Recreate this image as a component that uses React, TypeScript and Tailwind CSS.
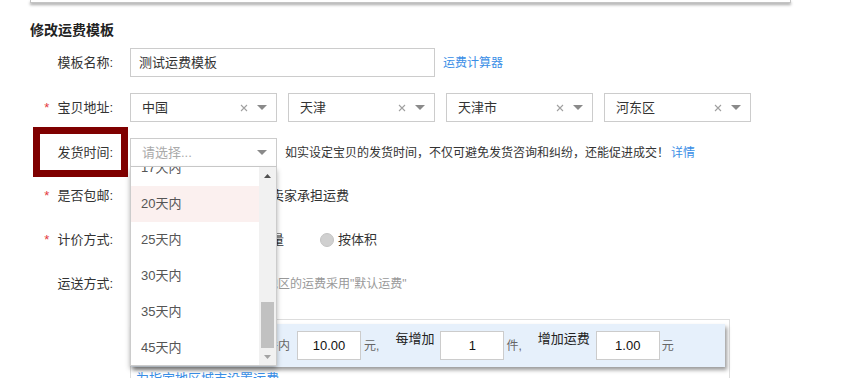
import React from "react";

function Caret({ className = "" }: { className?: string }) {
  return (
    <svg width="10" height="5" viewBox="0 0 10 5" className={className}>
      <path d="M0 0H10L5 5Z" fill="#8a8a8a" />
    </svg>
  );
}

function Cross() {
  return (
    <svg width="8" height="8" viewBox="0 0 8 8">
      <path d="M1 1L7 7M7 1L1 7" stroke="#a0a0a0" strokeWidth="1.1" />
    </svg>
  );
}

function Label({ req, children }: { req?: boolean; children: React.ReactNode }) {
  return (
    <div className="w-[85px] shrink-0 pr-[2px] text-right text-[13px] leading-[16px] text-[#333]">
      {req && <span className="mr-[8px] text-[#e4393c]">*</span>}
      {children}
    </div>
  );
}

function Select({ value }: { value: string }) {
  return (
    <div className="flex h-[29px] w-[147px] shrink-0 items-center border border-[#ccc] bg-white pl-[11px] pr-[9px]">
      <span className="flex-1 text-[13px] text-[#333]">{value}</span>
      <Cross />
      <Caret className="ml-[9px]" />
    </div>
  );
}

function Radio({ text, mr = "" }: { text: string; mr?: string }) {
  return (
    <div className={`flex items-center ${mr}`}>
      <span className="h-[14px] w-[14px] rounded-full border border-[#c4c4c4] bg-[#d0d0d0]" />
      <span className="ml-[4px] text-[13px] text-[#333]">{text}</span>
    </div>
  );
}

function NumInput({ value }: { value: string }) {
  return (
    <div className="flex h-[29px] w-[64px] shrink-0 items-center justify-center border border-[#ccc] bg-white text-[13px] text-[#111]">
      {value}
    </div>
  );
}

export default function App() {
  const items = ["17天内", "20天内", "25天内", "30天内", "35天内", "45天内"];
  return (
    <div className="relative h-[378px] w-[841px] overflow-hidden bg-white font-['Liberation_Sans','Noto_Sans_CJK_SC',sans-serif]">
      {/* bottom of previous panel */}
      <div className="ml-[30px] h-[3px] w-[761px] border-x border-b border-[#c4c4c4] shadow-[0_2px_3px_rgba(0,0,0,0.35)]" />

      <div className="pl-[30px]">
        <div className="mt-[19px] text-[14px] font-bold leading-[16px] text-[#222]">修改运费模板</div>

        {/* row 1 */}
        <div className="mt-[10px] flex h-[29px] items-center">
          <Label>模板名称:</Label>
          <div className="ml-[15px] flex h-[29px] w-[305px] items-center border border-[#ccc] pl-[8px] text-[13px] text-[#333]">
            测试运费模板
          </div>
          <span className="ml-[8px] text-[12px] text-[#3a8ee6]">运费计算器</span>
        </div>

        {/* row 2 */}
        <div className="mt-[16px] flex h-[29px] items-center">
          <Label req>宝贝地址:</Label>
          <div className="ml-[15px] flex gap-[11px]">
            <Select value="中国" />
            <Select value="天津" />
            <Select value="天津市" />
            <Select value="河东区" />
          </div>
        </div>

        {/* row 3 */}
        <div className="mt-[16px] flex h-[29px] items-center">
          <Label>发货时间:</Label>
          <div className="relative ml-[15px]">
            <div className="flex h-[29px] w-[147px] items-center border border-[#ccc] bg-white pl-[11px] pr-[9px]">
              <span className="flex-1 text-[13px] text-[#aaa]">请选择...</span>
              <Caret />
            </div>
            <div className="absolute left-0 top-[29px] z-20 flex h-[199px] w-[147px] border border-t-0 border-[#ccc] bg-white shadow-[0_3px_5px_rgba(0,0,0,0.3)]">
              <div className="flex-1 overflow-hidden">
                <div className="-mt-[17px]">
                  {items.map((it) => (
                    <div
                      key={it}
                      className={`flex h-[36px] items-center pl-[10px] text-[13px] text-[#555] ${
                        it === "20天内" ? "bg-[#fbf0ef]" : ""
                      }`}
                    >
                      {it}
                    </div>
                  ))}
                </div>
              </div>
              <div className="flex w-[17px] flex-col bg-[#f1f1f1]">
                <div className="flex h-[17px] items-center justify-center">
                  <svg width="7" height="4" viewBox="0 0 7 4">
                    <path d="M0 4H7L3.5 0Z" fill="#505050" />
                  </svg>
                </div>
                <div className="flex flex-1 flex-col items-center justify-end">
                  <div className="h-[46px] w-[13px] bg-[#c1c1c1]" />
                </div>
                <div className="flex h-[17px] items-center justify-center">
                  <svg width="7" height="4" viewBox="0 0 7 4">
                    <path d="M0 0H7L3.5 4Z" fill="#a3a3a3" />
                  </svg>
                </div>
              </div>
            </div>
          </div>
          <span className="ml-[8px] text-[12px] text-[#333]">
            如实设定宝贝的发货时间，不仅可避免发货咨询和纠纷，还能促进成交！
          </span>
          <span className="ml-[2px] text-[12px] text-[#3a8ee6]">详情</span>
        </div>

        {/* row 4 */}
        <div className="mt-[14px] flex h-[29px] items-center">
          <Label req>是否包邮:</Label>
          <div className="ml-[15px] flex items-center">
            <Radio text="自定义运费" mr="mr-[40px]" />
            <Radio text="卖家承担运费" />
          </div>
        </div>

        {/* row 5 */}
        <div className="mt-[15px] flex h-[29px] items-center">
          <Label req>计价方式:</Label>
          <div className="ml-[15px] flex items-center">
            <Radio text="按件数" mr="mr-[40px]" />
            <Radio text="按重量" mr="mr-[36px]" />
            <Radio text="按体积" />
          </div>
        </div>

        {/* row 6 */}
        <div className="mt-[15px] flex h-[29px] items-center">
          <Label>运送方式:</Label>
          <span className="ml-[43px] text-[12px] text-[#999]">
            除指定地区外，其余地区的运费采用"默认运费"
          </span>
        </div>

        {/* fee box */}
        <div className="ml-[100px] mt-[21px] w-[600px] border border-[#ddd] pr-[4px] pt-[4px]">
          <div className="flex h-[43px] items-center bg-[#e6f0fb] pl-[10px] shadow-[2px_3px_4px_rgba(0,0,0,0.4)]">
            <span className="text-[13px] text-[#333]">默认运费</span>
            <div className="ml-[5px]">
              <NumInput value="1" />
            </div>
            <span className="ml-[4px] text-[12px] text-[#666]">件内</span>
            <div className="ml-[7px]">
              <NumInput value="10.00" />
            </div>
            <span className="ml-[3px] text-[12px] text-[#666]">元,</span>
            <span className="ml-[16px] mt-[7px] self-start text-[13px] leading-[16px] text-[#222]">每增加</span>
            <div className="ml-[6px]">
              <NumInput value="1" />
            </div>
            <span className="ml-[2px] text-[12px] text-[#666]">件,</span>
            <span className="ml-[16px] mt-[7px] self-start text-[13px] leading-[16px] text-[#222]">增加运费</span>
            <div className="ml-[6px]">
              <NumInput value="1.00" />
            </div>
            <span className="ml-[2px] text-[12px] text-[#666]">元</span>
          </div>
          <div className="mt-[2px] pl-[5px] text-[13px] leading-[20px] text-[#3a8ee6]">为指定地区城市设置运费</div>
        </div>
      </div>

      {/* annotation box */}
      <div className="absolute left-[33px] top-[127px] h-[50px] w-[95px] border-[7px] border-[#7f0000]" />
    </div>
  );
}
